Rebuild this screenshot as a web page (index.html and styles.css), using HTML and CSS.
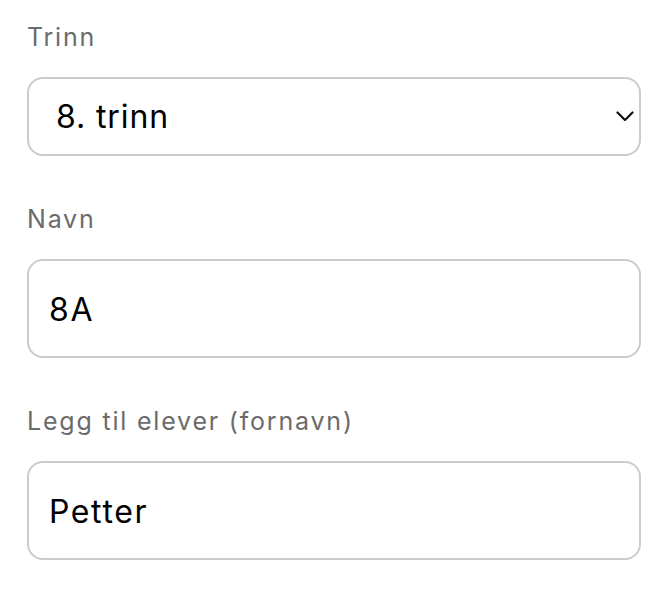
FILE: index.html
```html
<!DOCTYPE html>
<html lang="no">
<head>
<meta charset="utf-8">
<title>Klasse</title>
<link rel="stylesheet" href="styles.css">
</head>
<body>
<form class="form">
  <div class="field">
    <label class="label" for="trinn">Trinn</label>
    <div class="select-wrap">
      <select id="trinn" class="select">
        <option>8. trinn</option>
        <option>9. trinn</option>
        <option>10. trinn</option>
      </select>
      <svg class="chevron" width="18" height="11" viewBox="0 0 18 11" aria-hidden="true"><path d="M1.5 1.5 L9 9 L16.5 1.5" fill="none" stroke="#111" stroke-width="2.2" stroke-linecap="round" stroke-linejoin="round"/></svg>
    </div>
  </div>
  <div class="field">
    <label class="label" for="navn">Navn</label>
    <input id="navn" class="input" type="text" value="8A">
  </div>
  <div class="field">
    <label class="label" for="elever">Legg til elever (fornavn)</label>
    <input id="elever" class="input" type="text" value="Petter">
  </div>
</form>
</body>
</html>
```
FILE: styles.css
```css
html, body {
  margin: 0;
  padding: 0;
  background: #fff;
}
body {
  font-family: Inter, "Liberation Sans", sans-serif;
}
.form {
  display: flex;
  flex-direction: column;
  gap: 48px;
  padding: 22px 31px 0 27px;
}
.field {
  display: flex;
  flex-direction: column;
  gap: 25px;
}
.label {
  font-size: 25px;
  line-height: 30px;
  color: #6b6b6b;
  letter-spacing: 1.8px;
}
.select-wrap {
  position: relative;
}
.select {
  appearance: none;
  -webkit-appearance: none;
  width: 100%;
  height: 79px;
  box-sizing: border-box;
  border: 2px solid #cbcbcb;
  border-radius: 16px;
  background: #fff;
  font-family: inherit;
  font-size: 32px;
  color: #000;
  padding: 0 50px 0 27px;
  letter-spacing: 0.9px;
  outline: none;
}
.chevron {
  position: absolute;
  right: 7px;
  top: 34px;
}
.input {
  width: 100%;
  height: 99px;
  box-sizing: border-box;
  border: 2px solid #cbcbcb;
  border-radius: 16px;
  background: #fff;
  font-family: inherit;
  font-size: 32px;
  color: #000;
  padding: 2px 20px 0;
  letter-spacing: 1.6px;
  outline: none;
}
```
